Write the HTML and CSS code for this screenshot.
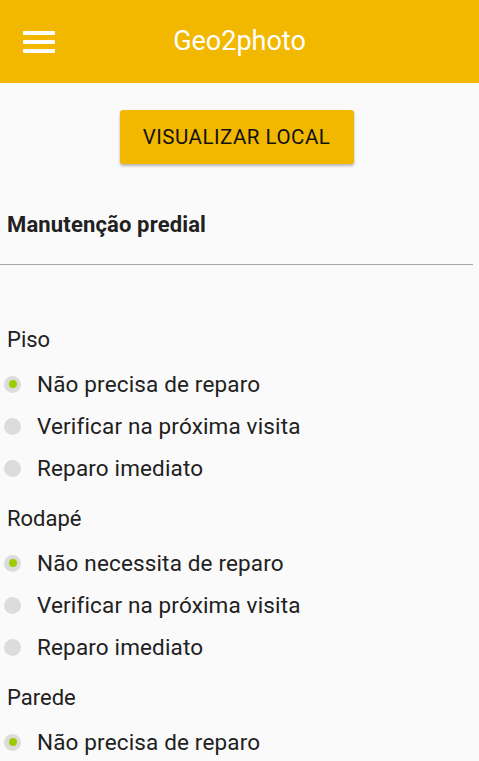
FILE: index.html
```html
<!DOCTYPE html>
<html lang="pt">
<head>
<meta charset="utf-8">
<title>Geo2photo</title>
<link rel="stylesheet" href="styles.css">
</head>
<body>
<header class="appbar">
  <div class="menu" aria-label="menu">
    <span class="bar"></span><span class="bar"></span><span class="bar"></span>
  </div>
  <h1 class="apptitle">Geo2photo</h1>
  <div class="spacer"></div>
</header>
<main class="content">
  <div class="btnwrap"><button class="btn">VISUALIZAR LOCAL</button></div>
  <h2 class="formtitle">Manutenção predial</h2>
  <hr class="divider">
  <div class="list">
    <section class="group">
      <div class="label">Piso</div>
      <label class="opt"><span class="radio on"></span>Não precisa de reparo</label>
      <label class="opt"><span class="radio"></span>Verificar na próxima visita</label>
      <label class="opt"><span class="radio"></span>Reparo imediato</label>
    </section>
    <section class="group">
      <div class="label">Rodapé</div>
      <label class="opt"><span class="radio on"></span>Não necessita de reparo</label>
      <label class="opt"><span class="radio"></span>Verificar na próxima visita</label>
      <label class="opt"><span class="radio"></span>Reparo imediato</label>
    </section>
    <section class="group">
      <div class="label">Parede</div>
      <label class="opt"><span class="radio on"></span>Não precisa de reparo</label>
    </section>
  </div>
</main>
</body>
</html>
```

FILE: styles.css
```css
* { box-sizing: border-box; }
html, body { margin: 0; padding: 0; }
body {
  background: #fafafa;
  font-family: Roboto, "Noto Sans", sans-serif;
  color: #212121;
  overflow: hidden;
  height: 761px;
}
.appbar {
  height: 83px;
  background: #f2b800;
  display: grid;
  grid-template-columns: 1fr auto 1fr;
  align-items: center;
}
.menu {
  display: flex;
  flex-direction: column;
  gap: 5px;
  margin-left: 23px;
  width: 32px;
}
.bar {
  display: block;
  height: 4px;
  background: #fff;
  border-radius: 1px;
}
.apptitle {
  margin: 0;
  font-size: 27px;
  font-weight: 400;
  color: #fff;
  line-height: 1;
}
.content { width: 473px; }
.btnwrap {
  display: flex;
  justify-content: center;
  padding-top: 27px;
}
.btn {
  width: 234px;
  height: 54px;
  border: 0;
  border-radius: 3px;
  background: #f2b800;
  color: #111;
  font-family: Roboto, sans-serif;
  font-size: 20.5px;
  letter-spacing: 0.5px;
  box-shadow: 0 2px 3px rgba(0,0,0,0.28);
  padding: 0;
}
.formtitle {
  margin: 41px 0 0 7px;
  font-size: 22px;
  font-weight: 700;
  letter-spacing: 0.15px;
  line-height: 40px;
  color: #212121;
}
.divider {
  margin: 19px 0 0 0;
  border: 0;
  height: 1px;
  background: #a8a8a8;
}
.list { padding-top: 45px; }
.group { margin-top: 7px; }
.label {
  height: 46px;
  line-height: 46px;
  padding-left: 7px;
  font-size: 22px;
}
.opt {
  display: flex;
  align-items: center;
  height: 42px;
  font-size: 22.5px;
  letter-spacing: 0.15px;
  color: #212121;
}
.radio {
  width: 17px;
  height: 17px;
  border-radius: 50%;
  background: #dcdcdc;
  margin-left: 4px;
  margin-right: 16px;
  display: flex;
  align-items: center;
  justify-content: center;
}
.radio.on::after {
  content: "";
  width: 8px;
  height: 8px;
  border-radius: 50%;
  background: #9ccc00;
}
```
